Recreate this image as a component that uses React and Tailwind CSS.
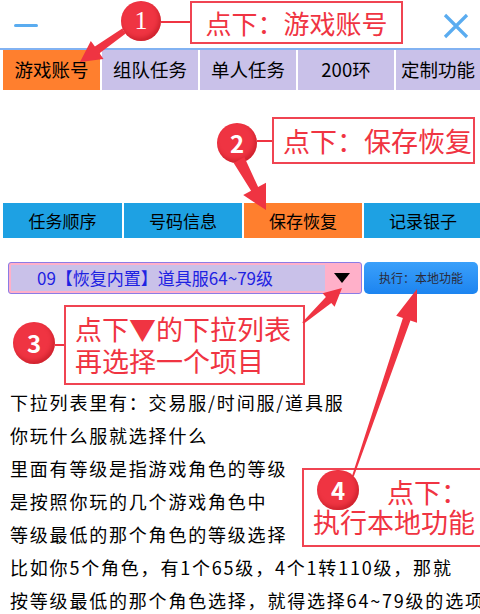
import React from "react";

const RED = "#ef3442";

/* arrow polygon from tail to tip: tapered shaft + triangular head */
function arrowPoints(x1, y1, x2, y2, w0, w1, headLen, headHalf) {
  const dx = x2 - x1;
  const dy = y2 - y1;
  const len = Math.hypot(dx, dy);
  const ux = dx / len;
  const uy = dy / len;
  const nx = -uy;
  const ny = ux;
  const bx = x2 - ux * headLen;
  const by = y2 - uy * headLen;
  const pts = [
    [x1 + nx * w0, y1 + ny * w0],
    [bx + nx * w1, by + ny * w1],
    [bx + nx * headHalf, by + ny * headHalf],
    [x2, y2],
    [bx - nx * headHalf, by - ny * headHalf],
    [bx - nx * w1, by - ny * w1],
    [x1 - nx * w0, y1 - ny * w0],
  ];
  return pts.map((p) => p[0].toFixed(1) + "," + p[1].toFixed(1)).join(" ");
}

const Badge = ({ n, className = "" }) => (
  <div
    className={
      "w-[40px] h-[40px] shrink-0 rounded-full bg-[#ef3442] flex items-center justify-center text-white text-[24px] font-bold leading-none shadow-[inset_-2px_-3px_4px_rgba(150,0,10,0.35)] " +
      className
    }
  >
    {n}
  </div>
);

const Tab = ({ label, active, w, blue }) => (
  <div
    className={
      "shrink-0 flex items-center justify-center text-black " +
      w +
      " " +
      (active ? "bg-[#ff7f2e]" : blue ? "bg-[#1ea1e3]" : "bg-[#c9c1e9]")
    }
  >
    {label}
  </div>
);

const lines = [
  "下拉列表里有：交易服/时间服/道具服",
  "你玩什么服就选择什么",
  "里面有等级是指游戏角色的等级",
  "是按照你玩的几个游戏角色中",
  "等级最低的那个角色的等级选择",
  "比如你5个角色，有1个65级，4个1转110级，那就",
  "按等级最低的那个角色选择，就得选择64~79级的选项",
];

export default function App() {
  return (
    <div
      className="relative w-[480px] h-[614px] overflow-hidden bg-white"
      style={{ fontFamily: '"Noto Sans CJK SC", "Noto Sans", sans-serif' }}
    >
      {/* Top bar with callout 1 */}
      <div className="h-[50px] flex items-start pl-[14px] border-b-2 border-[#82b2f2]">
        <div className="w-[24px] h-[3px] mt-[24px] bg-[#5aacf0] rounded-sm" />
        <Badge
          n="1"
          className="ml-[83px] mt-[1px] font-normal text-[26px] [font-family:'Liberation_Serif',serif]"
        />
        <div className="w-[29px] h-[2px] mt-[21px] bg-[#ef3442]" />
        <div className="w-[213px] h-[43px] mt-[1px] border-2 border-[#f04452] flex items-center justify-center text-[26px] text-[#f03442] leading-none">
          点下：游戏账号
        </div>
        <svg width="26" height="26" viewBox="0 0 26 26" className="ml-[40px] mt-[13px]">
          <path d="M2 2 L24 24 M24 2 L2 24" stroke="#5aacf0" strokeWidth="3.2" />
        </svg>
      </div>

      {/* Main tabs */}
      <div className="h-[40px] flex gap-[2px] pl-[3px] text-[18.5px]">
        <Tab label="游戏账号" active w="w-[97px]" />
        <Tab label="组队任务" w="w-[96px]" />
        <Tab label="单人任务" w="w-[96px]" />
        <Tab label="200环" w="w-[96px]" />
        <Tab label="定制功能" w="w-[84px]" />
      </div>

      {/* Callout 2 */}
      <div className="flex items-center justify-end pr-[5px] pt-[27px] h-[74px]">
        <Badge n="2" className="mt-[4px]" />
        <div className="w-[15px] h-[2px] bg-[#ef3442]" />
        <div className="w-[203px] h-[47px] border-2 border-[#f04452] flex items-center justify-end pr-[1px] text-[27px] text-[#f03442] leading-none">
          点下：保存恢复
        </div>
      </div>

      {/* Sub tabs */}
      <div className="mt-[39px] h-[35px] flex gap-[2px] pl-[3px] text-[17px]">
        <Tab label="任务顺序" blue w="w-[119px]" />
        <Tab label="号码信息" blue w="w-[118px]" />
        <Tab label="保存恢复" active w="w-[118px]" />
        <Tab label="记录银子" blue w="w-[118px]" />
      </div>

      {/* Dropdown + execute */}
      <div className="mt-[24px] h-[32px] flex pl-[8px] gap-[2px]">
        <div className="w-[354px] h-[32px] border-[1.5px] border-[#8a7ce6] bg-[#ffb0c9] rounded-[3px] p-[2px] flex">
          <div className="flex-1 bg-[#c9c1e9] flex items-center pl-[26px] text-[17px] text-[#1e22e2] whitespace-nowrap">
            09【恢复内置】道具服64~79级
          </div>
          <div className="w-[34px] flex items-center justify-center">
            <svg width="16" height="10" viewBox="0 0 16 10">
              <path d="M0 0 L16 0 L8 10 Z" fill="#000" />
            </svg>
          </div>
        </div>
        <div className="w-[114px] h-[32px] rounded-[5px] bg-gradient-to-b from-[#3aa0fa] to-[#1c84f0] flex items-center justify-center text-[12px] text-[#2a2a3a]">
          执行：本地功能
        </div>
      </div>

      {/* Callout 3 */}
      <div className="mt-[11px] h-[80px] flex items-center pl-[13px]">
        <Badge n="3" className="mt-[-4px] w-[42px] h-[42px]" />
        <div className="w-[9px] h-[2px] bg-[#ef3442]" />
        <div className="w-[241px] h-[80px] border-2 border-[#f04452] flex flex-col justify-center pl-[9px] text-[27px] text-[#f03442] leading-[32px]">
          <div>点下▼的下拉列表</div>
          <div>再选择一个项目</div>
        </div>
      </div>

      {/* Explanation text */}
      <div className="mt-[1px] pl-[10px] text-[18px] leading-[33px] text-black tracking-[1.8px] whitespace-nowrap">
        {lines.map((t) => (
          <div key={t}>{t}</div>
        ))}
      </div>

      {/* Callout 4 (over the text) */}
      <div className="absolute left-[302px] top-[468px] w-[190px] h-[79px] border-2 border-[#f04452] bg-white text-[27px] text-[#f03442] leading-[30px]">
        <div className="pl-[83px] pt-[7px]">点下：</div>
        <div className="pl-[9px]">执行本地功能</div>
      </div>

      {/* Arrows */}
      <svg
        className="absolute inset-0 pointer-events-none"
        width="480"
        height="614"
        viewBox="0 0 480 614"
      >
        <polygon points={arrowPoints(124, 31, 80, 62, 3, 4, 21, 11)} fill={RED} />
        <polygon points={arrowPoints(239, 160, 266, 210, 6, 4, 24, 13)} fill={RED} />
        <polygon points={arrowPoints(303, 323, 342, 288, 1, 4, 18, 9)} fill={RED} />
        <polygon points={arrowPoints(353, 476, 417, 289, 1, 4, 32, 11)} fill={RED} />
      </svg>
      <Badge n="4" className="absolute left-[317px] top-[470px] w-[42px] h-[40px]" />
    </div>
  );
}
